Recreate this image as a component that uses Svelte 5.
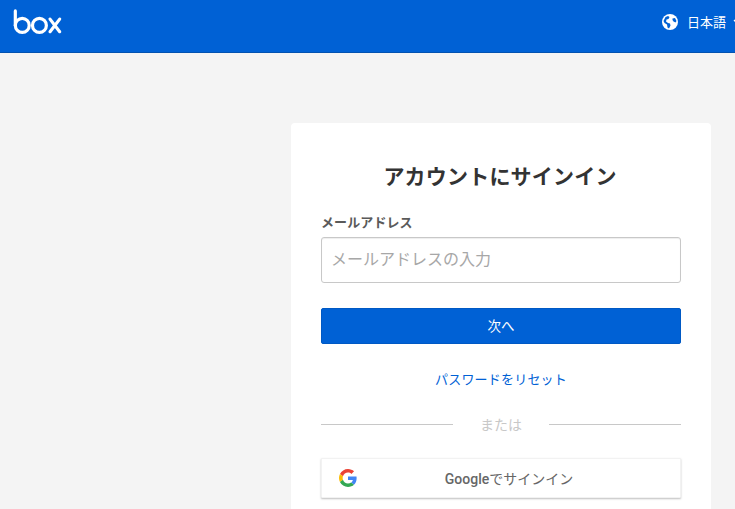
<script>
  let email = $state('');
</script>

<div class="page">
  <header class="top">
    <svg class="logo" viewBox="0 0 50 28" width="49" height="27" aria-label="box">
      <g fill="none" stroke="#fff" stroke-width="3.300" stroke-linecap="round">
        <path d="M2 2v15" />
        <circle cx="9.200" cy="17" r="7.200" />
        <circle cx="27" cy="17" r="7.200" />
        <path d="M38 10.500l10 13M48 10.500l-10 13" />
      </g>
    </svg>
    <div class="lang">
      <svg viewBox="0 0 16 16" width="16" height="16">
        <circle cx="8" cy="8" r="8" fill="#fff" />
        <path d="M3.500 3l2.500-1 1.500 1-1 2-2 .5-.5 2 2 1.500 2 .5.500 2-1.500 3-1.500-1-.5-3-2.500-1.500L1.500 7zM10.500 4.500l2.500-.5 1.500 3-1 1.500-2-1-1-1.500z" fill="#0061d5" />
      </svg>
      <span>日本語</span>
      <svg class="chev" viewBox="0 0 10 6" width="10" height="6"><path d="M1 1l4 4 4-4" fill="none" stroke="#fff" stroke-width="1.300" /></svg>
    </div>
  </header>

  <main class="main">
    <section class="card">
      <h1>アカウントにサインイン</h1>
      <label for="email">メールアドレス</label>
      <input id="email" type="text" placeholder="メールアドレスの入力" bind:value={email} />
      <button class="primary">次へ</button>
      <a class="reset" href="#reset">パスワードをリセット</a>
      <div class="or"><span>または</span></div>
      <button class="google">
        <svg viewBox="0 0 48 48" width="18" height="18">
          <path fill="#EA4335" d="M24 9.500c3.540 0 6.710 1.220 9.210 3.600l6.850-6.850C35.900 2.380 30.470 0 24 0 14.620 0 6.510 5.380 2.560 13.220l7.980 6.190C12.430 13.720 17.740 9.500 24 9.500z"/>
          <path fill="#4285F4" d="M46.980 24.550c0-1.570-.15-3.090-.38-4.550H24v9.020h12.940c-.58 2.960-2.260 5.480-4.780 7.180l7.730 6c4.510-4.180 7.090-10.360 7.090-17.650z"/>
          <path fill="#FBBC05" d="M10.530 28.590c-.48-1.450-.76-2.990-.76-4.590s.270-3.140.76-4.590l-7.980-6.190C.92 16.460 0 20.120 0 24c0 3.880.92 7.540 2.560 10.780l7.970-6.190z"/>
          <path fill="#34A853" d="M24 48c6.480 0 11.930-2.130 15.890-5.810l-7.730-6c-2.150 1.450-4.920 2.300-8.160 2.300-6.260 0-11.570-4.220-13.470-9.910l-7.980 6.190C6.510 42.620 14.620 48 24 48z"/>
        </svg>
        <span><b>Google</b>でサインイン</span>
      </button>
    </section>
  </main>
</div>

<style>
  :global(body) {
    margin: 0;
    background: #f4f4f4;
    overflow: hidden;
  }
  .page {
    height: 509px;
    overflow: hidden;
    font-family: "Noto Sans CJK JP", "Open Sans", sans-serif;
    color: #222;
  }
  .top {
    height: 52px;
    background: #0061d5;
    border-bottom: 1px solid #0352b0;
    display: flex;
    align-items: center;
    justify-content: space-between;
    padding: 0 0 0 13px;
    overflow: hidden;
  }
  .logo {
    margin-top: -8px;
    flex: none;
  }
  .lang {
    display: flex;
    align-items: center;
    color: #fff;
    font-size: 13px;
    margin-right: -8px;
    margin-top: -9px;
  }
  .lang span {
    margin-left: 9px;
  }
  .chev {
    margin-left: 7px;
  }
  .main {
    display: flex;
    padding: 70px 24px 0 291px;
  }
  .card {
    width: 360px;
    height: 420px;
    padding: 30px;
    background: #fff;
    border-radius: 4px;
    display: flex;
    flex-direction: column;
    flex: none;
  }
  h1 {
    margin: 7px 0 0;
    padding-right: 2px;
    font-size: 21px;
    line-height: 30px;
    font-weight: 700;
    letter-spacing: 0.2px;
    text-align: center;
    color: #333;
  }
  label {
    margin-top: 22px;
    font-size: 13px;
    line-height: 20px;
    font-weight: 700;
    letter-spacing: 0.1px;
    color: #5a5a5a;
  }
  input {
    box-sizing: border-box;
    margin-top: 5px;
    width: 360px;
    height: 46px;
    padding: 0 9px 4px;
    border: 1px solid #c8c8c8;
    border-radius: 3px;
    font: inherit;
    font-size: 16px;
    box-shadow: inset 0 1px 1px #eee;
    outline: none;
  }
  input::placeholder {
    color: #a7a7a7;
  }
  .primary {
    margin-top: 25px;
    height: 36px;
    background: #0061d5;
    border: 1px solid #0059c4;
    border-radius: 2px;
    color: #fff;
    font: inherit;
    font-size: 13.500px;
    padding: 0 0 2px;
  }
  .reset {
    margin-top: 25px;
    text-align: center;
    color: #0061d5;
    font-size: 13px;
    letter-spacing: 0.2px;
    line-height: 20px;
    text-decoration: none;
  }
  .or {
    margin-top: 25px;
    height: 20px;
    display: flex;
    align-items: center;
    gap: 27px;
    color: #c8c8c8;
    font-size: 14px;
  }
  .or::before,
  .or::after {
    content: "";
    flex: 1;
    height: 1px;
    background: #c8c8c8;
  }
  .google {
    margin-top: 24px;
    height: 40px;
    flex: none;
    position: relative;
    background: #fff;
    border: 1px solid #f2f2f2;
    border-radius: 1px;
    box-shadow: 0 1px 2px rgba(0, 0, 0, 0.25);
    font: inherit;
    font-size: 14px;
    color: #666;
    padding: 0 0 0 16px;
    display: flex;
    align-items: center;
    justify-content: center;
  }
  .google svg {
    position: absolute;
    left: 17px;
    top: 10px;
  }
  .google b {
    font-family: Roboto, sans-serif;
    font-weight: 500;
    font-size: 14px;
  }
</style>
